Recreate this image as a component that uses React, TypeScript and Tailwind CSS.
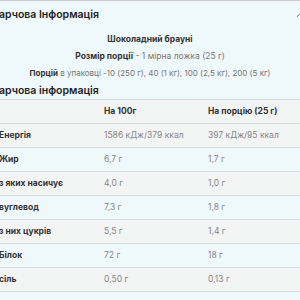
import { ChevronUp } from 'lucide-react';

const rows: [string, string, string][] = [
  ['Енергія', '1586 кДж/379 ккал', '397 кДж/95 ккал'],
  ['Жир', '6,7 г', '1,7 г'],
  ['з яких насичує', '4,0 г', '1,0 г'],
  ['вуглевод', '7,3 г', '1,8 г'],
  ['з них цукрів', '5,5 г', '1,4 г'],
  ['Білок', '72 г', '18 г'],
  ['сіль', '0,50 г', '0,13 г'],
];

export default function App() {
  return (
    <div
      className="h-[300px] w-[300px] overflow-hidden border-t border-[#c9cccd] bg-[#eff8fa] text-[#333]"
      style={{ fontFamily: 'Inter, "Noto Sans", sans-serif' }}
    >
      <div className="-ml-[8px] w-[316px]">
        <div className="flex h-[28px] items-center justify-between">
          <h2 className="text-[10.5px] font-semibold text-[#222]">Харчова Інформація</h2>
          <ChevronUp className="mr-[4px] h-[9px] w-[9px] text-[#666]" strokeWidth={2.5} />
        </div>

        <div className="mt-[2px] text-center text-[8.5px] leading-[17px]">
          <p className="font-bold">Шоколадний брауні</p>
          <p>
            <span className="font-bold">Розмір порції</span>
            <span className="text-[#777]"> - 1 мірна ложка (25 г)</span>
          </p>
          <p className="text-[8px]">
            <span className="font-bold">Порцій</span>
            <span className="text-[#777]"> в упаковці -10 (250 г), 40 (1 кг), 100 (2,5 кг), 200 (5 кг)</span>
          </p>
        </div>

        <h3 className="text-[10.5px] font-semibold leading-[17px] text-[#222]">Харчова інформація</h3>

        <div className="border-t border-[#dcdcdc] text-[8.5px]">
          <div className="grid h-[24px] grid-cols-[112px_104px_100px] items-center border-b border-[#dcdcdc] bg-[#f2f3f3] font-bold">
            <span></span>
            <span>На 100г</span>
            <span>На порцію (25 г)</span>
          </div>
          {rows.map(([label, a, b], i) => (
            <div
              key={label}
              className={`grid h-[24px] grid-cols-[112px_104px_100px] items-center border-b border-[#dcdcdc] ${
                i % 2 === 0 ? 'bg-[#f3f4f4]' : 'bg-[#eff8fa]'
              }`}
            >
              <span className="pl-[7px] font-bold">{label}</span>
              <span className="text-[#888]">{a}</span>
              <span className="text-[#888]">{b}</span>
            </div>
          ))}
        </div>
      </div>
    </div>
  );
}
